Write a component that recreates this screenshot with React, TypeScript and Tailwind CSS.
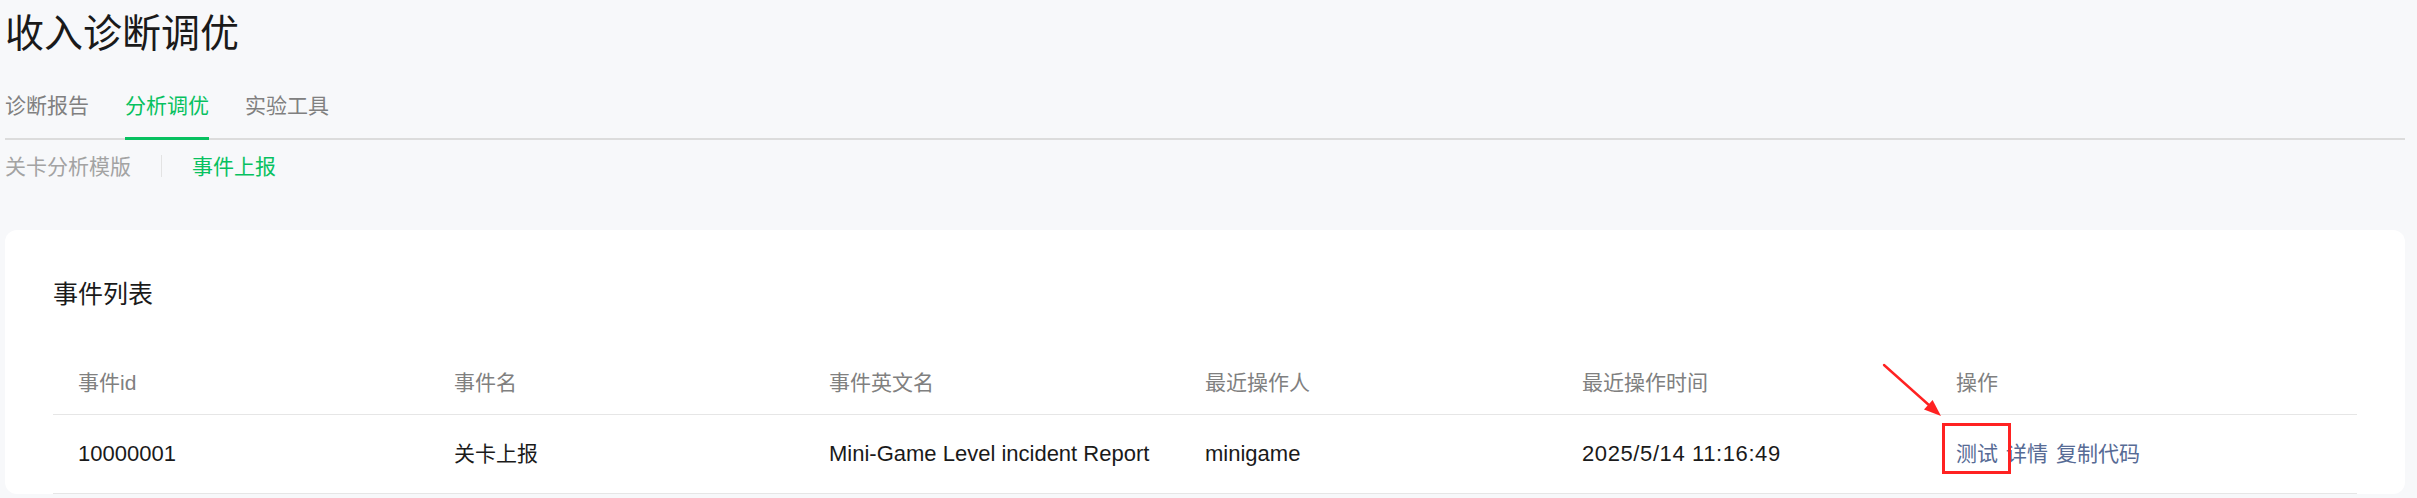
import React from "react";

const FONT = '"Liberation Sans", "Noto Sans CJK SC", sans-serif';

export default function App() {
  return (
    <div
      className="min-h-[498px] w-full bg-[#f7f8fa] pl-[5px] pr-[12px] pb-[5px]"
      style={{ fontFamily: FONT }}
    >
      <h1 className="pt-[14px] text-[39px] leading-[39px] font-normal text-[#1a1a1a]">收入诊断调优</h1>

      <div className="mt-[42px] flex gap-[36px] border-b-2 border-[#dcdcdc]">
        <div className="-mb-[2px] border-b-[3px] border-transparent pb-[21px] text-[21px] leading-[21px] text-[#808080]">诊断报告</div>
        <div className="-mb-[2px] border-b-[3px] border-[#07c160] pb-[21px] text-[21px] leading-[21px] text-[#07c160]">分析调优</div>
        <div className="-mb-[2px] border-b-[3px] border-transparent pb-[21px] text-[21px] leading-[21px] text-[#808080]">实验工具</div>
      </div>

      <div className="mt-[15px] flex items-center gap-[30px]">
        <div className="text-[21px] leading-[21px] text-[#a3a3a3]">关卡分析模版</div>
        <div className="h-[22px] w-px bg-[#e3e3e3]" />
        <div className="text-[21px] leading-[21px] text-[#07c160]">事件上报</div>
      </div>

      <div className="mt-[53px] rounded-[12px] bg-white px-[48px] pt-[52px]">
        <div className="text-[25px] leading-[25px] text-[#1a1a1a]">事件列表</div>

        <div className="mt-[44px]">
          <div className="grid grid-cols-[376px_375px_376px_377px_374px_1fr] border-b border-[#e6e6e6] text-[21px] leading-[21px] text-[#808080]">
            <div className="flex h-[63px] items-center pl-[25px]">事件id</div>
            <div className="flex h-[63px] items-center pl-[25px]">事件名</div>
            <div className="flex h-[63px] items-center pl-[25px]">事件英文名</div>
            <div className="flex h-[63px] items-center pl-[25px]">最近操作人</div>
            <div className="flex h-[63px] items-center pl-[25px]">最近操作时间</div>
            <div className="flex h-[63px] items-center pl-[25px]">操作</div>
          </div>
          <div className="grid grid-cols-[376px_375px_376px_377px_374px_1fr] border-b border-[#e6e6e6] text-[21px] leading-[30px] text-[#1a1a1a]">
            <div className="flex h-[78px] items-center pl-[25px] text-[22px]">10000001</div>
            <div className="flex h-[78px] items-center pl-[25px]">关卡上报</div>
            <div className="flex h-[78px] items-center pl-[25px] text-[22px]">Mini-Game Level incident Report</div>
            <div className="flex h-[78px] items-center pl-[25px] text-[22px]">minigame</div>
            <div className="flex h-[78px] items-center pl-[25px] text-[22px] tracking-[0.6px]">2025/5/14 11:16:49</div>
            <div className="flex h-[78px] items-center gap-[8px] pl-[25px] text-[#576b95]">
              <span className="relative">
                测试
                <span className="pointer-events-none absolute left-[-14px] top-[-16px] h-[51px] w-[69px] border-[3px] border-[#ff2222]" />
                <svg
                  className="pointer-events-none absolute left-[-78px] top-[-80px]"
                  width="68"
                  height="62"
                  viewBox="0 0 68 62"
                >
                  <line x1="6" y1="6" x2="52" y2="47" stroke="#ff2222" strokeWidth="2.4" strokeLinecap="round" />
                  <polygon points="63,57 46,50.5 54.6,40.9" fill="#ff2222" />
                </svg>
              </span>
              <span>详情</span>
              <span>复制代码</span>
            </div>
          </div>
        </div>
      </div>
    </div>
  );
}
